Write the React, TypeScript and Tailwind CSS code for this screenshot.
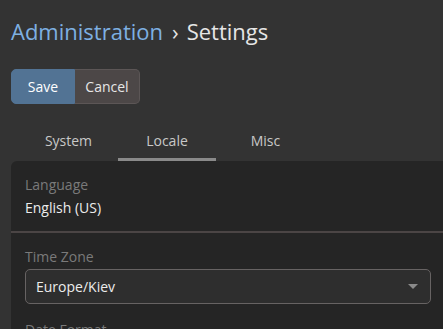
export default function App() {
  return (
    <div className="w-[443px] h-[329px] overflow-hidden bg-[#333333] text-[#e6e6e6]" style={{ fontFamily: '"Open Sans", sans-serif' }}>
      <div className="pl-[11px] pt-[14px]">
        <h1 className="text-[22px] leading-[34px] font-normal">
          <span className="text-[#7eb0e2]">Administration</span>
          <span className="text-[#e6e6e6] ml-[9px]">›</span>
          <span className="text-[#e6e6e6] ml-[8px]">Settings</span>
        </h1>
      </div>
      <div className="pl-[11px] pt-[21px] flex">
        <button className="h-[35px] w-[64px] bg-[#527394] text-white text-[14px] rounded-l-[5px] border border-[#527394]">Save</button>
        <button className="h-[35px] w-[65px] bg-[#4c4747] text-[#e6e6e6] text-[14px] rounded-r-[5px] border border-[#5c5656] border-l-0">Cancel</button>
      </div>
      <div className="pl-[19px] pt-[21px] flex">
        <div className="w-[99px] h-[36px] flex items-start justify-center pt-[5px] text-[14px] text-[#c8c8c8]">System</div>
        <div className="w-[98px] h-[36px] flex items-start justify-center pt-[5px] text-[14px] text-[#c8c8c8] border-b-[3px] border-[#8a8a8a]">Locale</div>
        <div className="w-[99px] h-[36px] flex items-start justify-center pt-[5px] text-[14px] text-[#c8c8c8]">Misc</div>
      </div>
      <div className="ml-[11px] bg-[#252525] rounded-tl-[6px] h-[200px]">
        <div className="px-[14px] pt-[14px] pb-[13px]">
          <div className="text-[14px] leading-[20px] text-[#7a7a7a]">Language</div>
          <div className="text-[14px] leading-[20px] text-[#ececec] mt-[3px]">English (US)</div>
        </div>
        <div className="h-[2px] bg-[#4b4545]" />
        <div className="px-[14px] pt-[14px]">
          <div className="text-[14px] leading-[20px] text-[#7a7a7a]">Time Zone</div>
          <div className="mt-[2px] w-[406px] h-[35px] rounded-[5px] border border-[#676363] bg-[#2e2e2e] flex items-center justify-between pl-[10px] pr-[12px]">
            <span className="text-[14px] text-[#ececec]">Europe/Kiev</span>
            <svg width="10" height="6" viewBox="0 0 10 6"><path d="M0 0 L10 0 L5 5 Z" fill="#8a8a8a" /></svg>
          </div>
          <div className="text-[14px] leading-[20px] text-[#7a7a7a] mt-[16px]">Date Format</div>
        </div>
      </div>
    </div>
  );
}
